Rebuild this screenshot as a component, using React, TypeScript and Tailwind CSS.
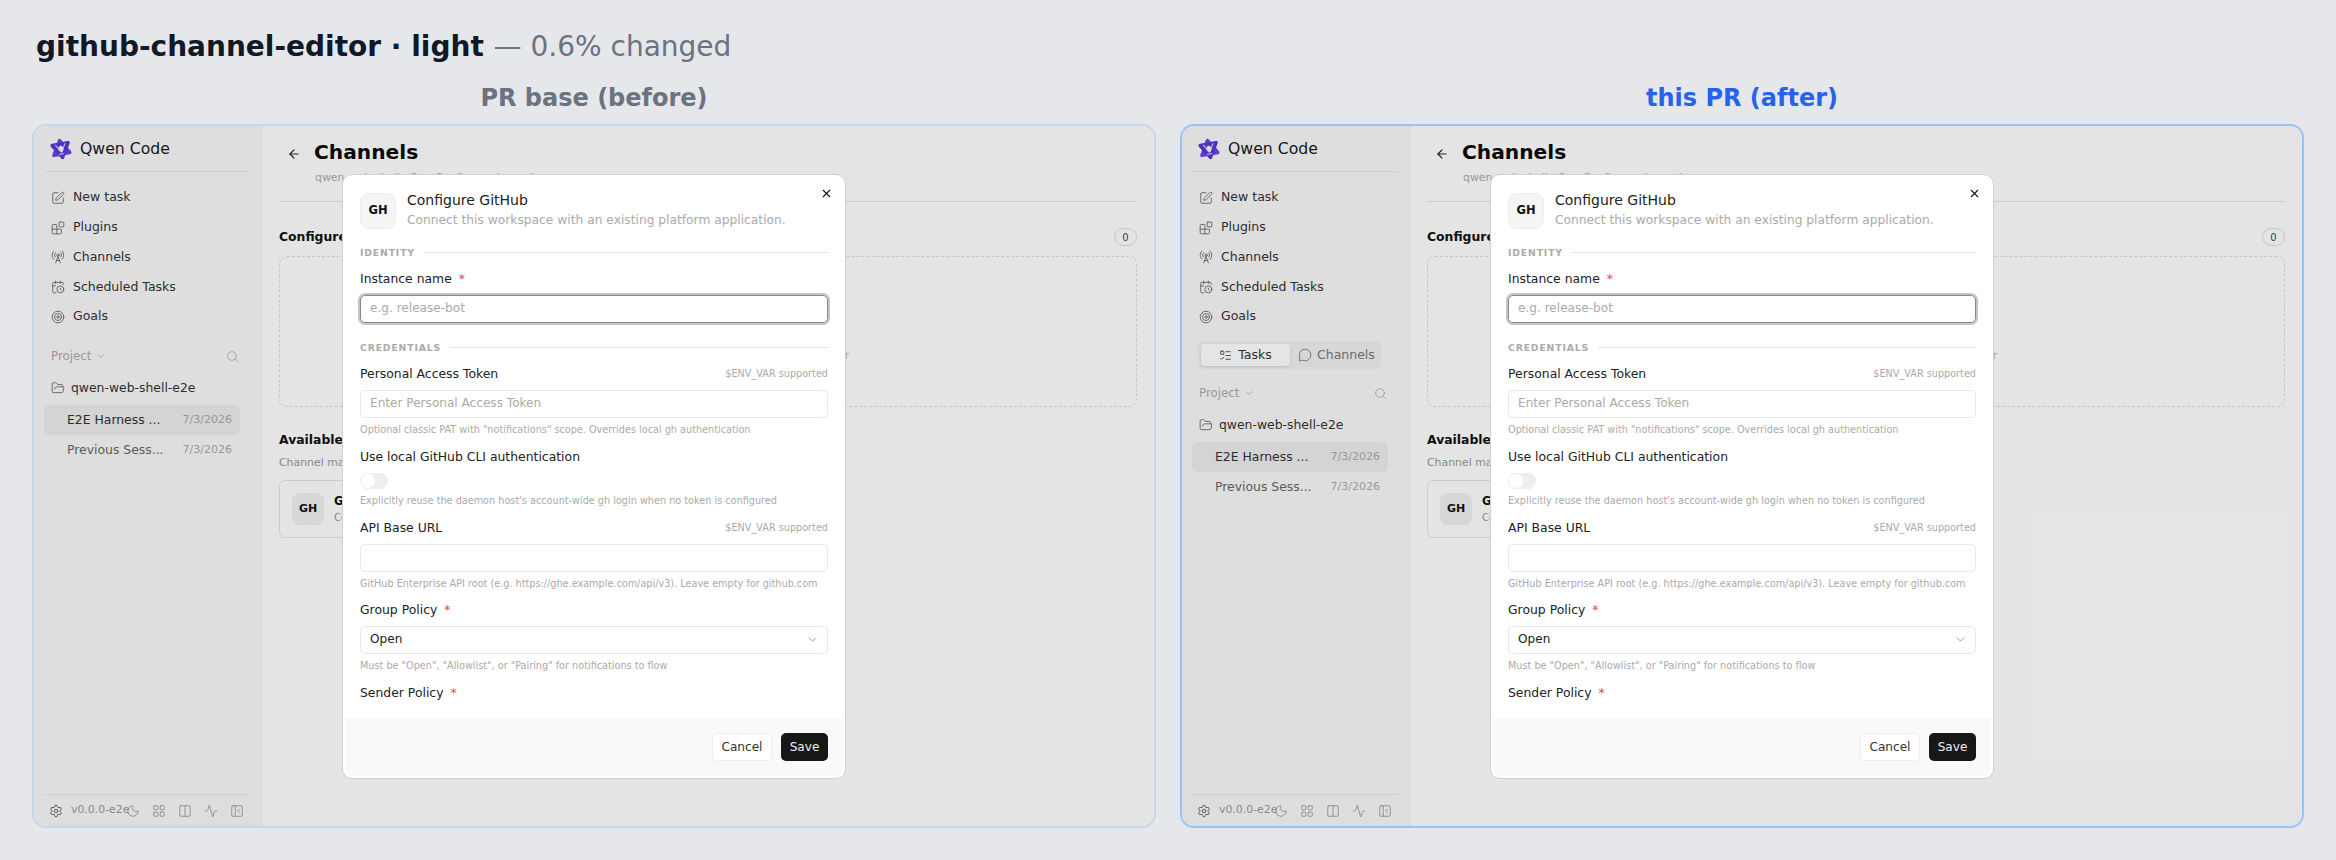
import React from 'react';
import {
  Activity, ArrowLeft, Blocks, CalendarClock, ChevronDown, Columns2, FolderOpen, LayoutGrid, ListTodo,
  MessageCircle, Moon, PanelLeftClose, RadioTower, Search, Settings, SquarePen, Target, X,
} from 'lucide-react';

const navItems = [
  { label: 'New task', icon: SquarePen },
  { label: 'Plugins', icon: Blocks },
  { label: 'Channels', icon: RadioTower },
  { label: 'Scheduled Tasks', icon: CalendarClock },
  { label: 'Goals', icon: Target },
];

const QwenLogo = () => (
  <svg viewBox="0 0 24 24" className="w-[24px] h-[24px] shrink-0">
    <g transform="rotate(-10 12 12)" fill="none" strokeLinejoin="round">
      <path d="M12 3.500 L20 17 H4 Z" stroke="#6a45e0" strokeWidth="3.600" />
      <path d="M12 20.500 L4 7 H20 Z" stroke="#5a36d6" strokeWidth="3.600" />
      <path d="M7 7 L12 15.500 M14.500 17 H9 M17 7 L14 12" stroke="#dcd6f0" strokeWidth="1" />
    </g>
  </svg>
);

const Sidebar = ({ after }: { after: boolean }) => (
  <aside className="w-[228px] shrink-0 h-full flex flex-col bg-[#f8f8f8] border-r border-[#ececec] px-[10px]">
    <div className="h-[46px] shrink-0 flex items-center gap-[7px] pl-[5px] border-b border-[#e9e9e9]">
      <QwenLogo />
      <span className="text-[15.7px] text-[#1a1a1a]">Qwen Code</span>
    </div>
    <nav className="flex flex-col mt-[11px]">
      {navItems.map(({ label, icon: Icon }) => (
        <div key={label} className="h-[29.7px] flex items-center gap-[8px] pl-[7px] text-[12.5px] text-[#333]">
          <Icon className="w-[14px] h-[14px] text-[#666]" strokeWidth={1.5} />
          <span>{label}</span>
        </div>
      ))}
    </nav>
    {after && (
      <div className="mt-[10px] ml-[6px] w-[183px] h-[28px] rounded-[6px] bg-[#f0f0f0] flex items-center gap-[8px] px-[3px] text-[12.5px]">
        <div className="w-[89px] h-[22px] rounded-[4px] bg-[#fff] shadow-sm flex items-center justify-center gap-[6px] text-[#333]">
          <ListTodo className="w-[13px] h-[13px]" strokeWidth={1.5} />
          <span>Tasks</span>
        </div>
        <div className="flex items-center gap-[5px] text-[#777]">
          <MessageCircle className="w-[14px] h-[14px]" strokeWidth={1.5} />
          <span>Channels</span>
        </div>
      </div>
    )}
    <div className={`${after ? 'mt-[14px]' : 'mt-[15px]'} h-[20px] flex items-center pl-[7px] pr-[12px] text-[11.8px] text-[#aaa]`}>
      <span>Project</span>
      <ChevronDown className="w-[12px] h-[12px] ml-[4px]" strokeWidth={1.5} />
      <Search className="w-[13px] h-[13px] ml-auto" strokeWidth={1.5} />
    </div>
    <div className="mt-[12px] h-[20px] flex items-center gap-[6px] pl-[7px] text-[12.4px] text-[#333]">
      <FolderOpen className="w-[14px] h-[14px] text-[#666]" strokeWidth={1.5} />
      <span>qwen-web-shell-e2e</span>
    </div>
    <div className="w-[196px] mt-[7px] flex flex-col">
      <div className="h-[29.7px] flex items-center justify-between rounded-[6px] bg-[#ececec] pl-[23px] pr-[8px]">
        <span className="text-[12.4px] text-[#333]">E2E Harness ...</span>
        <span className="text-[11px] text-[#aaa]">7/3/2026</span>
      </div>
      <div className="h-[29.7px] flex items-center justify-between pl-[23px] pr-[8px]">
        <span className="text-[12.4px] text-[#666]">Previous Sess...</span>
        <span className="text-[11px] text-[#aaa]">7/3/2026</span>
      </div>
    </div>
    <div className="mt-auto h-[32px] shrink-0 border-t border-[#e9e9e9] flex items-center text-[#999]">
      <Settings className="w-[14px] h-[14px] ml-[5px] text-[#555]" strokeWidth={1.5} />
      <span className="w-[57px] ml-[8px] text-[10.9px] whitespace-nowrap">v0.0.0-e2e</span>
      <div className="flex items-center gap-[12px] ml-[-2px]">
        <Moon className="w-[14px] h-[14px]" strokeWidth={1.5} />
        <LayoutGrid className="w-[14px] h-[14px]" strokeWidth={1.5} />
        <Columns2 className="w-[14px] h-[14px]" strokeWidth={1.5} />
        <Activity className="w-[14px] h-[14px]" strokeWidth={1.5} />
        <PanelLeftClose className="w-[14px] h-[14px]" strokeWidth={1.5} />
      </div>
    </div>
  </aside>
);

const MainContent = () => (
  <main className="flex-1 min-w-0 h-full bg-[#fefefe] pl-[17px] pr-[17px]">
    <div className="h-[76px] flex flex-col border-b border-[#e4e4e4]">
      <div className="flex items-center pt-[14px] pl-[8px]">
        <ArrowLeft className="w-[14px] h-[14px] mt-[4px] text-[#222]" strokeWidth={2} />
        <h1 className="ml-[13px] text-[20.2px] leading-[24px] font-bold text-[#0a0a0a]">Channels</h1>
      </div>
      <p className="ml-[36px] mt-[6px] text-[10.9px] text-[#aaa]">qwen-web-shell-e2e · Configure channels</p>
    </div>
    <div className="mt-[25px] h-[20px] flex items-center justify-between">
      <h2 className="text-[12.4px] font-bold text-[#111]">Configured</h2>
      <span className="w-[23px] h-[18px] rounded-full border border-[#ddd] flex items-center justify-center text-[10px] text-[#444]">0</span>
    </div>
    <div className="mt-[9px] h-[151px] rounded-[8px] border border-dashed border-[#ddd] pt-[70px] pr-[6px] flex flex-col items-center justify-center text-center text-[11px] leading-[22px] text-[#aaa]">
      <p>No channels configured yet. Add one from the list or</p>
      <p>connect an existing platform application to begin.</p>
    </div>
    <h2 className="mt-[24px] text-[12.4px] font-bold text-[#111]">Available</h2>
    <p className="mt-[5px] text-[10.9px] text-[#999]">Channel marketplace</p>
    <div className="mt-[9px] w-[420px] h-[58px] rounded-[6px] border border-[#e4e4e4] flex items-center gap-[10px] pl-[12px]">
      <div className="w-[32px] h-[32px] rounded-[8px] bg-[#f0f0f0] flex items-center justify-center text-[11px] font-bold text-[#111]">GH</div>
      <div>
        <div className="text-[11.5px] font-bold text-[#111]">GitHub</div>
        <div className="text-[10px] text-[#999]">Connect</div>
      </div>
    </div>
  </main>
);

const SectionRule = ({ label }: { label: string }) => (
  <div className="flex items-center gap-[9px] h-[12px]">
    <span className="text-[9.3px] font-bold tracking-[0.09em] text-[#aaa]">{label}</span>
    <div className="flex-1 h-px bg-[#e4e4e4]" />
  </div>
);

const FieldLabel = ({ label, required, env }: { label: string; required?: boolean; env?: boolean }) => (
  <div className="flex items-center justify-between h-[16px]">
    <span className="text-[12.4px] text-[#222]">
      {label}
      {required && <span className="ml-[7px] text-[#ef4444]">*</span>}
    </span>
    {env && <span className="text-[9.7px] text-[#aaa]">$ENV_VAR supported</span>}
  </div>
);

const Hint = ({ children }: { children: React.ReactNode }) => (
  <p className="text-[9.7px] leading-[12px] text-[#aaa] whitespace-nowrap">{children}</p>
);

const TextBox = ({ placeholder }: { placeholder?: string }) => (
  <div className="h-[28px] rounded-[5px] border border-[#e8e8e8] flex items-center pl-[9px] text-[12.1px] text-[#aaa]">{placeholder}</div>
);

const Modal = () => (
  <div className="w-[504px] h-[605px] rounded-[10px] bg-white border border-[#d0d0d0] p-[2px] flex flex-col overflow-hidden">
    <div className="flex-1 min-h-0 px-[15px] pt-[16px] relative">
      <X className="absolute right-[10px] top-[10px] w-[13px] h-[13px] text-[#111]" strokeWidth={2} />
      <div className="flex items-center gap-[11px] h-[36px]">
        <div className="w-[36px] h-[36px] rounded-[9px] bg-[#f5f5f5] border border-[#eee] flex items-center justify-center text-[11.5px] font-bold text-[#111]">GH</div>
        <div className="-mt-[2px]">
          <div className="text-[14px] leading-[20px] text-[#222]">Configure GitHub</div>
          <div className="text-[12.25px] leading-[20px] text-[#aaa]">Connect this workspace with an existing platform application.</div>
        </div>
      </div>
      <div className="mt-[18px]"><SectionRule label="IDENTITY" /></div>
      <div className="mt-[13px]"><FieldLabel label="Instance name" required /></div>
      <div className="mt-[7px] h-[28px] rounded-[5px] border border-[#888] ring-2 ring-[#c4c4c4] flex items-center pl-[9px] text-[12.1px] text-[#aaa]">e.g. release-bot</div>
      <div className="mt-[19px]"><SectionRule label="CREDENTIALS" /></div>
      <div className="mt-[13px]"><FieldLabel label="Personal Access Token" env /></div>
      <div className="mt-[7px]"><TextBox placeholder="Enter Personal Access Token" /></div>
      <div className="mt-[6px]"><Hint>Optional classic PAT with "notifications" scope. Overrides local gh authentication</Hint></div>
      <div className="mt-[14px]"><FieldLabel label="Use local GitHub CLI authentication" /></div>
      <div className="mt-[7px] w-[28px] h-[16px] rounded-full bg-[#eee] p-[1px]"><div className="w-[14px] h-[14px] rounded-full bg-white" /></div>
      <div className="mt-[6px]"><Hint>Explicitly reuse the daemon host's account-wide gh login when no token is configured</Hint></div>
      <div className="mt-[14px]"><FieldLabel label="API Base URL" env /></div>
      <div className="mt-[7px]"><TextBox /></div>
      <div className="mt-[6px]"><Hint>GitHub Enterprise API root (e.g. https://ghe.example.com/api/v3). Leave empty for github.com</Hint></div>
      <div className="mt-[13px]"><FieldLabel label="Group Policy" required /></div>
      <div className="mt-[7px] h-[28px] rounded-[5px] border border-[#e8e8e8] flex items-center justify-between pl-[9px] pr-[8px] text-[12.1px] text-[#222]">
        <span>Open</span>
        <ChevronDown className="w-[13px] h-[13px] text-[#888]" strokeWidth={1.5} />
      </div>
      <div className="mt-[6px]"><Hint>Must be "Open", "Allowlist", or "Pairing" for notifications to flow</Hint></div>
      <div className="mt-[14px]"><FieldLabel label="Sender Policy" required /></div>
    </div>
    <div className="h-[58px] shrink-0 rounded-b-[8px] bg-[#f9f9f9] flex items-center justify-end gap-[9px] pr-[15px] pt-[1px]">
      <button className="w-[60px] h-[28px] rounded-[5px] bg-white border border-[#eee] text-[12.1px] text-[#333]">Cancel</button>
      <button className="w-[47px] h-[28px] rounded-[5px] bg-[#171717] text-[12.1px] text-[#eee]">Save</button>
    </div>
  </div>
);

const Screenshot = ({ after }: { after: boolean }) => (
  <div className={`relative h-[704px] rounded-[14px] border-2 overflow-hidden flex ${after ? 'border-[#93c5fd]' : 'border-[#c7d6e8]'}`}>
    <Sidebar after={after} />
    <MainContent />
    <div className="absolute inset-0 bg-black/10 flex items-center justify-center">
      <Modal />
    </div>
  </div>
);

export default function App() {
  return (
    <div className="w-[2336px] h-[860px] overflow-hidden bg-[#e5e7eb] px-[32px] pt-[29px] font-['DejaVu_Sans',sans-serif]">
      <h1 className="h-[36px] ml-[4px] text-[28px] leading-[36px] font-bold text-[#111827] whitespace-nowrap">
        github-channel-editor · light <span className="font-normal text-[#6b7280]">— 0.6% changed</span>
      </h1>
      <div className="grid grid-cols-2 gap-[24px]">
        <div className="flex flex-col">
          <h2 className="h-[59px] pt-[6px] flex items-center justify-center text-[24px] font-bold text-[#6b7280]">PR base (before)</h2>
          <Screenshot after={false} />
        </div>
        <div className="flex flex-col">
          <h2 className="h-[59px] pt-[6px] flex items-center justify-center text-[24px] font-bold text-[#2563eb]">this PR (after)</h2>
          <Screenshot after />
        </div>
      </div>
    </div>
  );
}
